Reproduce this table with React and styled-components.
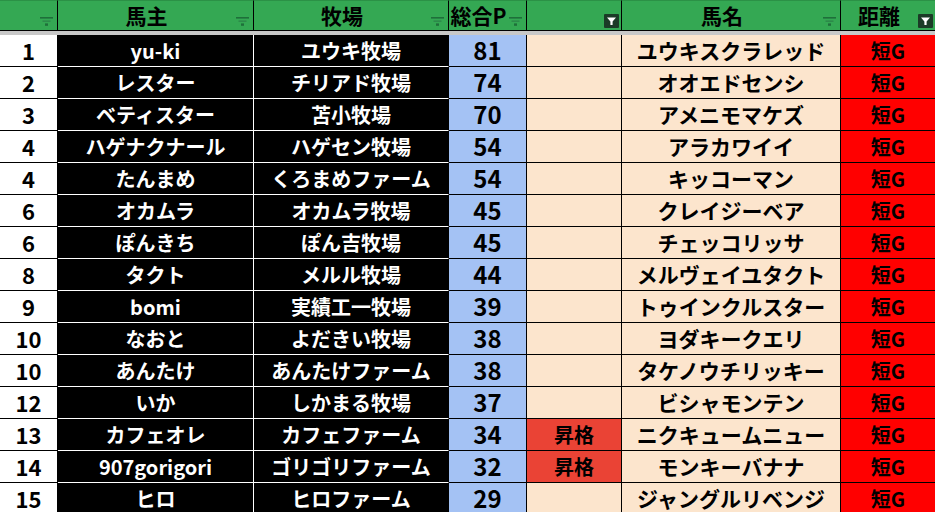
import React from "react";
import styled, { createGlobalStyle } from "styled-components";

const GlobalStyle = createGlobalStyle`
  html, body {
    margin: 0;
    padding: 0;
    background: #ffffff;
    overflow: hidden;
  }
  body {
    font-family: "Noto Sans CJK JP", "Noto Sans", sans-serif;
  }
`;

const Sheet = styled.div`
  display: grid;
  grid-template-columns: 58px 196px 195px 78px 95px 219px 94px;
  width: 935px;
  height: 512px;
  overflow: hidden;
  align-content: start;
`;

const HeaderCell = styled.div`
  position: relative;
  box-sizing: border-box;
  height: 31px;
  background: #34a853;
  border-top: 1px solid #2b9146;
  border-bottom: 1px solid #000;
  border-right: ${(p) => (p.$last ? "none" : "1px solid #000")};
  display: flex;
  align-items: center;
  justify-content: center;
  padding-right: 18px;
  font-size: 21px;
  font-weight: 700;
  color: #000;
  white-space: nowrap;
  line-height: 1.2;
`;

const Band = styled.div`
  grid-column: 1 / -1;
  height: 4px;
  background: #c8c8c8;
`;

const Cell = styled.div`
  box-sizing: border-box;
  height: 32px;
  background: ${(p) => p.$bg};
  color: ${(p) => p.$fg};
  border-bottom: 1px solid ${(p) => p.$line};
  border-right: ${(p) => (p.$vline ? `1px solid ${p.$vline}` : "none")};
  display: flex;
  align-items: center;
  justify-content: center;
  font-size: ${(p) => p.$size || 20}px;
  font-weight: 700;
  white-space: nowrap;
  line-height: 1.2;
`;

const IconSlot = styled.span`
  position: absolute;
  right: ${(p) => (p.$active ? 2 : 4)}px;
  bottom: ${(p) => (p.$active ? 2 : 4)}px;
  display: flex;
`;

const FilterIcon = ({ active }) => (
  <IconSlot $active={active}>
    {active ? (
      <svg width="15" height="14" viewBox="0 0 15 14">
        <rect x="0" y="0" width="15" height="14" rx="1" fill="#1b3b27" />
        <path d="M3 3.5 H12 L8.6 7.6 V11 H6.4 V7.6 Z" fill="#ffffff" />
      </svg>
    ) : (
      <svg width="13" height="9" viewBox="0 0 13 9">
        <rect x="0" y="0" width="13" height="1.6" fill="#1f6f3a" />
        <rect x="2.5" y="3.4" width="8" height="1.6" fill="#2d8a4a" />
        <rect x="5" y="6.4" width="3" height="2.4" fill="#1f6f3a" />
      </svg>
    )}
  </IconSlot>
);

const headers = [
  { label: "", filter: "off" },
  { label: "馬主", filter: "off" },
  { label: "牧場", filter: "off" },
  { label: "総合P", filter: "off" },
  { label: "", filter: "on" },
  { label: "馬名", filter: "off" },
  { label: "距離", filter: "on", last: true },
];

const rows = [
  ["1", "yu-ki", "ユウキ牧場", "81", "", "ユウキスクラレッド"],
  ["2", "レスター", "チリアド牧場", "74", "", "オオエドセンシ"],
  ["3", "ベティスター", "苫小牧場", "70", "", "アメニモマケズ"],
  ["4", "ハゲナクナール", "ハゲセン牧場", "54", "", "アラカワイイ"],
  ["4", "たんまめ", "くろまめファーム", "54", "", "キッコーマン"],
  ["6", "オカムラ", "オカムラ牧場", "45", "", "クレイジーベア"],
  ["6", "ぽんきち", "ぽん吉牧場", "45", "", "チェッコリッサ"],
  ["8", "タクト", "メルル牧場", "44", "", "メルヴェイユタクト"],
  ["9", "bomi", "実績工一牧場", "39", "", "トゥインクルスター"],
  ["10", "なおと", "よだきい牧場", "38", "", "ヨダキークエリ"],
  ["10", "あんたけ", "あんたけファーム", "38", "", "タケノウチリッキー"],
  ["12", "いか", "しかまる牧場", "37", "", "ビシャモンテン"],
  ["13", "カフェオレ", "カフェファーム", "34", "昇格", "ニクキュームニュー"],
  ["14", "907gorigori", "ゴリゴリファーム", "32", "昇格", "モンキーバナナ"],
  ["15", "ヒロ", "ヒロファーム", "29", "", "ジャングルリベンジ"],
];

const columns = [
  { bg: "#ffffff", fg: "#000", line: "#000", vline: "#000", size: 22 },
  { bg: "#000000", fg: "#fff", line: "#fff", vline: "#fff" },
  { bg: "#000000", fg: "#fff", line: "#fff", vline: "#000" },
  { bg: "#a4c2f4", fg: "#000", line: "#000", vline: "#000", size: 24 },
  { bg: "#fce5cd", fg: "#000", line: "#000", vline: "#000" },
  { bg: "#fce5cd", fg: "#000", line: "#000", vline: "#000", size: 21 },
  { bg: "#ff0000", fg: "#000", line: "#000", vline: null },
];

export default function App() {
  return (
    <>
      <GlobalStyle />
      <Sheet>
        {headers.map((h, i) => (
          <HeaderCell key={`h${i}`} $last={h.last}>
            {h.label}
            <FilterIcon active={h.filter === "on"} />
          </HeaderCell>
        ))}
        <Band />
        {rows.map((r, ri) =>
          [...r, "短G"].map((v, ci) => {
            const c = columns[ci];
            const bg = ci === 4 && v ? "#ea4335" : c.bg;
            return (
              <Cell
                key={`${ri}-${ci}`}
                $bg={bg}
                $fg={c.fg}
                $line={c.line}
                $vline={c.vline}
                $size={c.size}
              >
                {v}
              </Cell>
            );
          })
        )}
      </Sheet>
    </>
  );
}
